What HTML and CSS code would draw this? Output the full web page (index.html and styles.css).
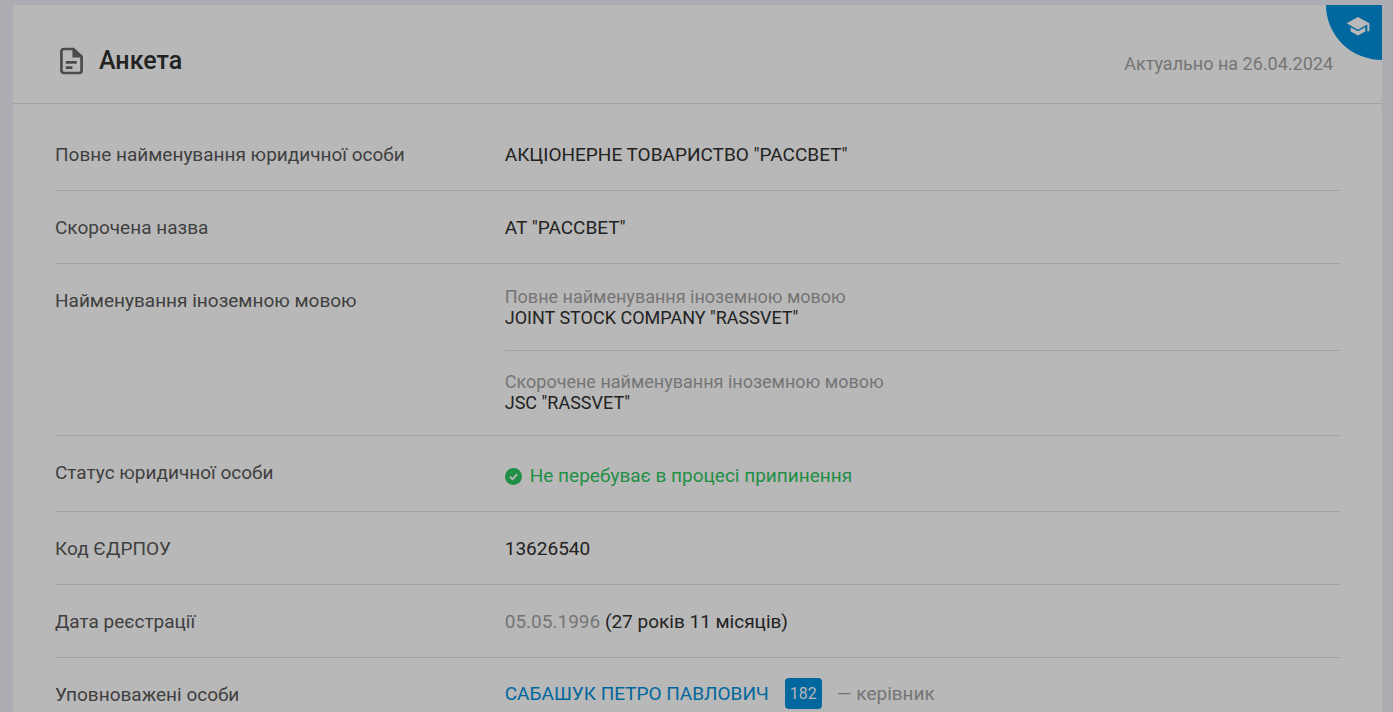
FILE: index.html
```html
<!DOCTYPE html>
<html lang="uk">
<head>
    <meta charset="UTF-8">
    <meta name="viewport" content="width=device-width, initial-scale=1.0">
    <title>Анкета</title>
    <link rel="stylesheet" href="styles.css">
</head>
<body>

<main class="page">
    <header class="card card-head">
        <svg class="head-icon" viewBox="0 0 24 28" aria-hidden="true">
            <path d="M4 1.5h10L22.5 9.5V24a2.5 2.5 0 0 1-2.5 2.5H4A2.5 2.5 0 0 1 1.5 24V4A2.5 2.5 0 0 1 4 1.5z" fill="none" stroke="#4b4b4b" stroke-width="2.8"/>
            <path d="M13 1.5h2L22.5 9v1.3H13z" fill="#4b4b4b"/>
            <path d="M6 15.5h11.5M6 21h7" stroke="#4b4b4b" stroke-width="2.8"/>
        </svg>
        <h1>Анкета</h1>
        <p class="actual">Актуально на 26.04.2024</p>
        <a class="corner" href="#" aria-label="Навчання">
            <svg viewBox="0 0 24 20" aria-hidden="true">
                <path d="M12 0L0 6.7l12 6.6 9.8-5.4V15H24V6.7z"/>
                <path d="M4.3 10.8v4.4L12 19.4l7.7-4.2v-4.4L12 15z"/>
            </svg>
        </a>
    </header>

    <section class="card card-body">
        <dl class="rows">
            <div class="row">
                <dt>Повне найменування юридичної особи</dt>
                <dd>АКЦІОНЕРНЕ ТОВАРИСТВО "РАССВЕТ"</dd>
            </div>
            <div class="row">
                <dt>Скорочена назва</dt>
                <dd>АТ "РАССВЕТ"</dd>
            </div>
            <div class="row row-names">
                <dt>Найменування іноземною мовою</dt>
                <dd>
                    <div class="name">
                        <p class="muted">Повне найменування іноземною мовою</p>
                        <p>JOINT STOCK COMPANY "RASSVET"</p>
                    </div>
                    <div class="name">
                        <p class="muted">Скорочене найменування іноземною мовою</p>
                        <p>JSC "RASSVET"</p>
                    </div>
                </dd>
            </div>
            <div class="row">
                <dt>Статус юридичної особи</dt>
                <dd class="status">
                    <svg viewBox="0 0 17 17" aria-hidden="true">
                        <circle cx="8.5" cy="8.5" r="8.5" fill="#1f8f45"/>
                        <path d="M5 8.7l2.6 2.5 4.6-5" fill="none" stroke="#b8b8b8" stroke-width="1.9"/>
                    </svg>
                    <span>Не перебуває в процесі припинення</span>
                </dd>
            </div>
            <div class="row">
                <dt>Код ЄДРПОУ</dt>
                <dd>13626540</dd>
            </div>
            <div class="row">
                <dt>Дата реєстрації</dt>
                <dd><span class="muted">05.05.1996</span> (27 років 11 місяців)</dd>
            </div>
            <div class="row row-person">
                <dt>Уповноважені особи</dt>
                <dd class="person">
                    <a href="#">САБАШУК ПЕТРО ПАВЛОВИЧ</a>
                    <a class="count" href="#">182</a>
                    <span class="muted">— керівник</span>
                </dd>
            </div>
        </dl>
    </section>
</main>

</body>
</html>
```
FILE: styles.css
```css
* {
    box-sizing: border-box;
}

body {
    margin: 0;
    background-color: #acadb3;
    color: #222;
    font-family: Roboto, "Liberation Sans", sans-serif;
    font-size: 19px;
    line-height: 24px;
}

h1, p, dl, dd {
    margin: 0;
}

a {
    color: #00679f;
    text-decoration: none;
}

.page {
    display: flex;
    flex-direction: column;
    min-height: 100vh;
    padding: 5px 11px 0 13px;
}

.card {
    background-color: #b8b8b8;
    border-radius: 4px 4px 0 0;
}

/* Шапка */
.card-head {
    position: relative;
    display: flex;
    align-items: center;
    padding: 36px 49px 22px 47px;
    border-bottom: 1px solid #a2a2a4;
}

.head-icon {
    width: 23px;
    height: 28px;
    margin-right: 16px;
}

h1 {
    font-size: 25px;
    line-height: 40px;
    font-weight: 500;
}

.actual {
    margin-left: auto;
    padding-top: 6px;
    font-size: 18px;
    color: #757575;
}

.corner {
    position: absolute;
    top: 0;
    right: 0;
    width: 56px;
    height: 55px;
    background-color: #00679f;
    border-bottom-left-radius: 100%;
}

.corner svg {
    position: absolute;
    top: 12px;
    left: 20px;
    width: 24px;
    height: 19px;
    fill: #b8b8b8;
}

/* Дані анкети */
.card-body {
    flex: 1;
    padding: 14px 42px 0;
}

.row {
    display: grid;
    grid-template-columns: 35% 1fr;
    padding: 25px 0 23px;
    border-bottom: 1px solid #a3a3a3;
}

.row:last-child {
    border-bottom: none;
}

dt {
    color: #3f3f3f;
}

.muted {
    color: #757575;
}

.row-names {
    padding: 0;
}

.row-names dt {
    padding-top: 25px;
}

.name {
    padding: 22px 0;
    font-size: 18px;
    line-height: 21px;
}

.name + .name {
    padding-top: 20px;
    border-top: 1px solid #a3a3a3;
}

.status {
    display: flex;
    align-items: center;
    gap: 8px;
    padding-top: 3px;
    color: #1f8f45;
}

.status svg {
    width: 17px;
    height: 17px;
}

.row-person {
    padding: 20px 0 0;
}

.row-person dt {
    padding-top: 5px;
}

.person {
    display: flex;
    align-items: center;
}

.count {
    margin: 0 15px 0 16px;
    padding: 0 5px;
    background-color: #00679f;
    border-radius: 4px;
    color: #b8b8b8;
    font-size: 16px;
    line-height: 31px;
}
```
